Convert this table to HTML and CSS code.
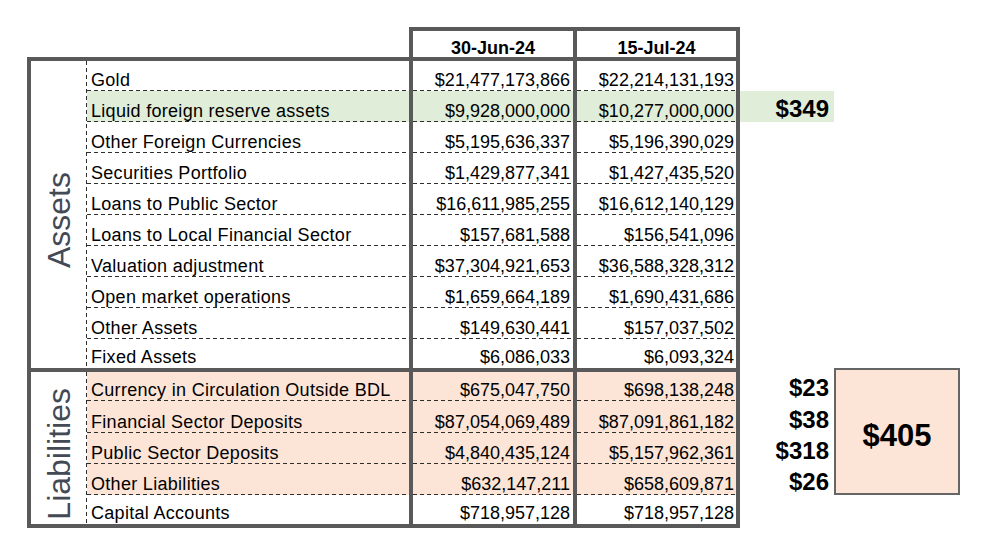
FILE: index.html
```html
<!DOCTYPE html>
<html lang="en">
<head>
<meta charset="utf-8">
<title>Balance sheet comparison</title>
<link rel="stylesheet" href="styles.css">
</head>
<body>
<div class="page">
<table class="sheet">
  <colgroup>
    <col class="col-cat">
    <col class="col-label">
    <col class="col-v1">
    <col class="col-v2">
    <col class="col-extra">
    <col class="col-box">
  </colgroup>
  <tr class="row-head">
    <td></td>
    <td></td>
    <th class="v1 head">30-Jun-24</th>
    <th class="v2 head">15-Jul-24</th>
    <td></td>
    <td></td>
  </tr>
  <tr class="row-first">
    <td class="cat cat-assets" rowspan="10"><span class="cat-text">Assets</span></td>
    <td class="label top dash">Gold</td>
    <td class="v1 num top dash">$21,477,173,866</td>
    <td class="v2 num top dash">$22,214,131,193</td>
    <td></td>
    <td></td>
  </tr>
  <tr class="row">
    <td class="label dash green">Liquid foreign reserve assets</td>
    <td class="v1 num dash green">$9,928,000,000</td>
    <td class="v2 num dash green">$10,277,000,000</td>
    <td class="extra green">$349</td>
    <td></td>
  </tr>
  <tr class="row">
    <td class="label dash">Other Foreign Currencies</td>
    <td class="v1 num dash">$5,195,636,337</td>
    <td class="v2 num dash">$5,196,390,029</td>
    <td></td>
    <td></td>
  </tr>
  <tr class="row">
    <td class="label dash">Securities Portfolio</td>
    <td class="v1 num dash">$1,429,877,341</td>
    <td class="v2 num dash">$1,427,435,520</td>
    <td></td>
    <td></td>
  </tr>
  <tr class="row">
    <td class="label dash">Loans to Public Sector</td>
    <td class="v1 num dash">$16,611,985,255</td>
    <td class="v2 num dash">$16,612,140,129</td>
    <td></td>
    <td></td>
  </tr>
  <tr class="row">
    <td class="label dash">Loans to Local Financial Sector</td>
    <td class="v1 num dash">$157,681,588</td>
    <td class="v2 num dash">$156,541,096</td>
    <td></td>
    <td></td>
  </tr>
  <tr class="row">
    <td class="label dash">Valuation adjustment</td>
    <td class="v1 num dash">$37,304,921,653</td>
    <td class="v2 num dash">$36,588,328,312</td>
    <td></td>
    <td></td>
  </tr>
  <tr class="row">
    <td class="label dash">Open market operations</td>
    <td class="v1 num dash">$1,659,664,189</td>
    <td class="v2 num dash">$1,690,431,686</td>
    <td></td>
    <td></td>
  </tr>
  <tr class="row">
    <td class="label dash">Other Assets</td>
    <td class="v1 num dash">$149,630,441</td>
    <td class="v2 num dash">$157,037,502</td>
    <td></td>
    <td></td>
  </tr>
  <tr class="row-last-asset">
    <td class="label">Fixed Assets</td>
    <td class="v1 num">$6,086,033</td>
    <td class="v2 num">$6,093,324</td>
    <td></td>
    <td></td>
  </tr>
  <tr class="row-sep">
    <td class="cat cat-liab" rowspan="5"><span class="cat-text">Liabilities</span></td>
    <td class="label top dash peach">Currency in Circulation Outside BDL</td>
    <td class="v1 num top dash peach">$675,047,750</td>
    <td class="v2 num top dash peach">$698,138,248</td>
    <td class="extra">$23</td>
    <td class="total" rowspan="4"><span class="total-text">$405</span></td>
  </tr>
  <tr class="row">
    <td class="label dash peach">Financial Sector Deposits</td>
    <td class="v1 num dash peach">$87,054,069,489</td>
    <td class="v2 num dash peach">$87,091,861,182</td>
    <td class="extra">$38</td>
  </tr>
  <tr class="row">
    <td class="label dash peach">Public Sector Deposits</td>
    <td class="v1 num dash peach">$4,840,435,124</td>
    <td class="v2 num dash peach">$5,157,962,361</td>
    <td class="extra">$318</td>
  </tr>
  <tr class="row">
    <td class="label dash peach">Other Liabilities</td>
    <td class="v1 num dash peach">$632,147,211</td>
    <td class="v2 num dash peach">$658,609,871</td>
    <td class="extra">$26</td>
  </tr>
  <tr class="row-end">
    <td class="label bottom">Capital Accounts</td>
    <td class="v1 num bottom">$718,957,128</td>
    <td class="v2 num bottom">$718,957,128</td>
    <td></td>
    <td></td>
  </tr>
</table>
</div>
</body>
</html>
```

FILE: styles.css
```css
html, body {
  margin: 0;
  padding: 0;
  background: #ffffff;
}

.page {
  padding: 27px 0 0 27px;
}

.sheet {
  border-collapse: separate;
  border-spacing: 0;
  table-layout: fixed;
  width: 933px;
  font-family: "Liberation Sans", Arial, sans-serif;
  color: #000;
}

.col-cat { width: 60px; }
.col-label { width: 322px; }
.col-v1 { width: 164px; }
.col-v2 { width: 167px; }
.col-extra { width: 94px; }
.col-box { width: 126px; }

.sheet td, .sheet th {
  padding: 0;
  box-sizing: border-box;
  font-size: 18px;
  line-height: 20px;
  vertical-align: bottom;
  white-space: nowrap;
}

.row-head { height: 30px; }
.row-first { height: 34px; }
.row { height: 31px; }
.row-last-asset { height: 29px; }
.row-sep { height: 33px; }
.row-end { height: 32px; }

.sheet .head {
  font-weight: bold;
  text-align: center;
  line-height: 18px;
  border-top: 4px solid #595959;
}

.sheet .v1 {
  border-left: 4px solid #595959;
}

.sheet .v2 {
  border-left: 4px solid #595959;
  border-right: 4px solid #595959;
}

.sheet .label {
  padding-left: 4px;
  padding-bottom: 1px;
  letter-spacing: 0.3px;
  color: #000;
}

.sheet .num {
  text-align: right;
  padding-bottom: 1px;
  color: #000;
}

.sheet .v1.num { padding-right: 3px; }
.sheet .v2.num { padding-right: 2px; }

.sheet .top { border-top: 4px solid #595959; }
.sheet .bottom { border-bottom: 4px solid #595959; }

.sheet .dash {
  background-image: linear-gradient(to right, #2e2e2e 4px, transparent 4px);
  background-size: 7px 1px;
  background-repeat: repeat-x;
  background-position: left bottom;
}

.sheet .green { background-color: #e0edd8; }
.sheet .peach { background-color: #fce4d6; }

.sheet .cat {
  border-left: 4px solid #595959;
  border-top: 4px solid #595959;
  padding-right: 1px;
  text-align: center;
  vertical-align: middle;
  background-image: linear-gradient(to bottom, #2e2e2e 4px, transparent 4px);
  background-size: 1px 7px;
  background-repeat: repeat-y;
  background-position: right top;
}

.sheet .cat-liab {
  border-bottom: 4px solid #595959;
}

.cat-text {
  display: inline-block;
  writing-mode: vertical-rl;
  transform: rotate(180deg);
  font-size: 32px;
  line-height: 34px;
  color: #434a54;
}

.cat-assets .cat-text { margin-top: 16px; }
.cat-liab .cat-text { margin-top: 16px; }

.sheet .extra {
  text-align: right;
  font-weight: bold;
  font-size: 24px;
  line-height: 24px;
  padding-right: 5px;
  padding-bottom: 1px;
}

.sheet .total {
  border: 2px solid #666666;
  background: #fce4d6;
  text-align: center;
  vertical-align: middle;
  padding-top: 8px;
}

.total-text {
  font-weight: bold;
  font-size: 31px;
  line-height: 34px;
}
```
